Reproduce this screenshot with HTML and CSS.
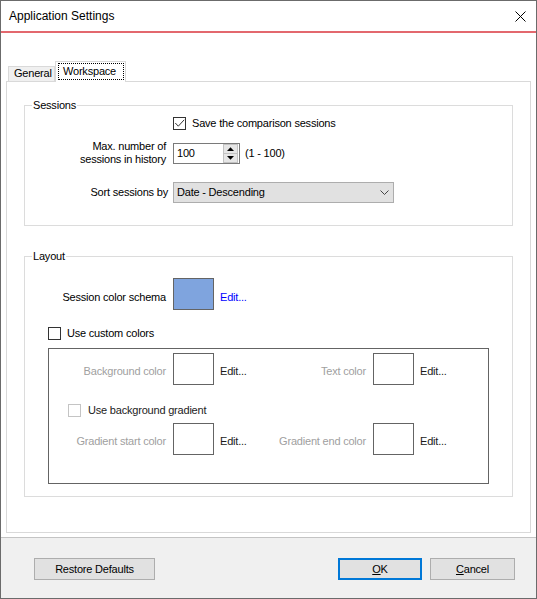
FILE: index.html
```html
<!DOCTYPE html>
<html>
<head>
<meta charset="utf-8">
<title>Application Settings</title>
<link rel="stylesheet" href="styles.css">
</head>
<body>
<div class="window">
  <div class="titlebar">
    <span class="title">Application Settings</span>
    <svg class="close" width="11" height="11" viewBox="0 0 11 11"><path d="M0.5 0.5L10.5 10.5M10.5 0.5L0.5 10.5" stroke="#000" stroke-width="1" fill="none"/></svg>
  </div>
  <div class="content">
    <div class="tabs">
      <div class="tab">General</div>
      <div class="tab active"><span class="focus">Workspace</span></div>
    </div>
    <div class="tabpage">
      <div class="group sessions">
        <div class="group-title">Sessions</div>
        <div class="row r-check">
          <span class="cb"><svg width="11" height="11" viewBox="0 0 11 11"><polyline points="1.3,5 4.3,8.2 10.2,1.8" fill="none" stroke="#333" stroke-width="1"/></svg></span>
          <span class="cb-text">Save the comparison sessions</span>
        </div>
        <div class="row r-max">
          <div class="lbl">Max. number of<br>sessions in history</div>
          <div class="spin">
            <span class="spin-val">100</span>
            <div class="spin-btns">
              <span class="sb"><svg width="7" height="4" viewBox="0 0 7 4"><polygon points="0,4 3.5,0.2 7,4" fill="#000"/></svg></span>
              <span class="sb"><svg width="7" height="4" viewBox="0 0 7 4"><polygon points="0,0 3.5,3.8 7,0" fill="#000"/></svg></span>
            </div>
          </div>
          <span class="range">(1 - 100)</span>
        </div>
        <div class="row r-sort">
          <div class="lbl lbl-sort">Sort sessions by</div>
          <div class="combo">
            <span>Date - Descending</span>
            <svg width="9" height="5" viewBox="0 0 9 5"><polyline points="0.5,0.5 4.5,4.5 8.5,0.5" fill="none" stroke="#444" stroke-width="1"/></svg>
          </div>
        </div>
      </div>

      <div class="group layout">
        <div class="group-title">Layout</div>
        <div class="row r-schema">
          <div class="lbl nudge3">Session color schema</div>
          <span class="swatch blue"></span>
          <span class="edit link nudge3">Edit...</span>
        </div>
        <div class="row r-custom">
          <span class="cb"></span>
          <span class="cb-text">Use custom colors</span>
        </div>
        <div class="panel">
          <div class="prow">
            <div class="plbl">Background color</div>
            <span class="swatch"></span>
            <span class="edit">Edit...</span>
            <div class="plbl">Text color</div>
            <span class="swatch"></span>
            <span class="edit">Edit...</span>
          </div>
          <div class="row r-grad">
            <span class="cb disabled"></span>
            <span class="cb-text grad-text">Use background gradient</span>
          </div>
          <div class="prow prow-last">
            <div class="plbl">Gradient start color</div>
            <span class="swatch"></span>
            <span class="edit">Edit...</span>
            <div class="plbl">Gradient end color</div>
            <span class="swatch"></span>
            <span class="edit">Edit...</span>
          </div>
        </div>
      </div>
    </div>
  </div>
  <div class="footer">
    <div class="btn restore">Restore Defaults</div>
    <div class="btn ok"><span><u>O</u>K</span></div>
    <div class="btn cancel"><span><u>C</u>ancel</span></div>
  </div>
</div>
</body>
</html>
```
FILE: styles.css
```css
* { box-sizing: border-box; }
html, body { margin: 0; padding: 0; }
body {
  font-family: "Liberation Sans", Arial, sans-serif;
  font-size: 11px;
  letter-spacing: -0.2px;
  color: #000;
  background: #fff;
}
.window {
  width: 537px;
  height: 599px;
  border: 1px solid #6b6b6b;
  display: flex;
  flex-direction: column;
  background: #fff;
}
.titlebar {
  height: 32px;
  border-bottom: 2px solid #e3686e;
  display: flex;
  align-items: center;
  justify-content: space-between;
  padding: 0 10px 0 8px;
  flex: none;
}
.title { font-size: 12px; letter-spacing: 0; }
.close { display: block; }

.content {
  flex: 1;
  background: #fff;
  padding: 28px 0 0 5px;
}
.tabs {
  display: flex;
  align-items: flex-end;
  margin-left: 2px;
}
.tab {
  height: 15px;
  width: 47px;
  border: 1px solid #d9d9d9;
  border-bottom: none;
  background: #f0f0f0;
  padding-left: 5px;
  line-height: 12px;
}
.tab.active {
  height: 21px;
  width: 71px;
  background: #fff;
  margin-bottom: -1px;
  position: relative;
  z-index: 1;
  padding: 1px 1px 0 2px;
}
.focus {
  display: block;
  width: 66px;
  height: 17px;
  border: 1px dotted #000;
  padding-left: 4px;
  line-height: 15px;
}
.tabpage {
  width: 525px;
  height: 452px;
  border: 1px solid #d9d9d9;
}

.group {
  border: 1px solid #dcdcdc;
  margin: 23px 17px 0;
}
.group.sessions { padding-bottom: 22px; }
.group.layout { margin-top: 30px; padding-bottom: 12px; }
.group-title {
  display: table;
  background: #fff;
  margin: -7px 0 0 7px;
  padding: 0 1px;
  line-height: 13px;
}

.row {
  display: flex;
  align-items: center;
  line-height: 13px;
}
.lbl {
  width: 148px;
  padding-right: 7px;
  text-align: right;
  flex: none;
}
.lbl-sort { padding-right: 5px; }
.nudge3 { padding-top: 6px; }

.cb {
  width: 13px;
  height: 13px;
  border: 1px solid #333;
  background: #fff;
  flex: none;
  display: block;
}
.cb svg { display: block; }
.cb.disabled { border-color: #c4c4c4; }
.cb-text { margin-left: 6px; }

.r-check { margin-top: 5px; height: 13px; padding-left: 148px; }
.r-max { margin-top: 10px; height: 26px; }
.r-sort { margin-top: 16px; height: 21px; }

.spin {
  width: 67px;
  height: 21px;
  border: 1px solid #7a7a7a;
  background: #fff;
  display: flex;
  align-items: stretch;
}
.spin-val { flex: 1; padding-left: 3px; line-height: 19px; }
.spin-btns {
  width: 16px;
  display: flex;
  flex-direction: column;
  padding: 0 1px 0 0;
}
.sb {
  flex: 1;
  background: #e6e6e6;
  border: 1px solid #c2c2c2;
  display: flex;
  align-items: center;
  justify-content: center;
}
.sb + .sb { border-top: none; }
.sb svg { display: block; }
.range { margin-left: 5px; }

.combo {
  width: 221px;
  height: 21px;
  border: 1px solid #adadad;
  background: #e1e1e1;
  display: flex;
  align-items: center;
  justify-content: space-between;
  padding: 0 4px 0 3px;
}
.combo svg { display: block; }

.r-schema { margin-top: 15px; height: 32px; }
.swatch {
  display: block;
  width: 41px;
  height: 32px;
  border: 1px solid #646464;
  background: #fff;
  flex: none;
}
.swatch.blue { background: #7fa4de; }
.edit { margin-left: 6px; color: #1a1a1a; }
.edit.link { color: #0000ff; }

.r-custom { margin-top: 17px; height: 13px; padding-left: 23px; }

.panel {
  margin: 8px 0 0 23px;
  width: 441px;
  border: 1px solid #646464;
  padding: 4px 0 28px 0;
}
.prow {
  display: grid;
  grid-template-columns: 124px 41px 59px 100px 41px auto;
  align-items: center;
  height: 32px;
  line-height: 13px;
}
.prow .plbl, .prow .edit { padding-top: 4px; }
.plbl {
  text-align: right;
  padding-right: 7px;
  color: #a0a0a0;
}
.r-grad { margin-top: 19px; height: 13px; padding-left: 19px; }
.grad-text { margin-left: 7px; color: #222; }
.prow-last { margin-top: 6px; }

.footer {
  flex: none;
  height: 61px;
  border-top: 1px solid #c4c4c4;
  background: #f0f0f0;
  display: flex;
  align-items: flex-start;
  padding: 20px 21px 0 33px;
}
.btn {
  height: 22px;
  border: 1px solid #adadad;
  background: #e1e1e1;
  display: flex;
  align-items: center;
  justify-content: center;
  line-height: 13px;
}
.restore { width: 121px; }
.ok { width: 84px; margin-left: auto; border: 2px solid #0078d7; }
.cancel { width: 85px; margin-left: 8px; }
```
